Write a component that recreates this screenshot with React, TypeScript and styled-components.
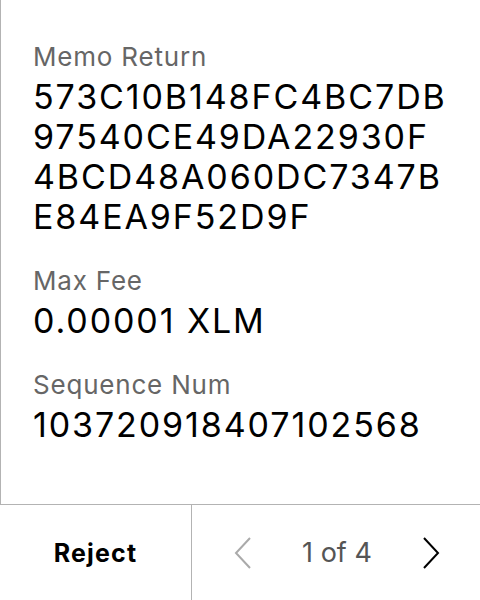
import React from "react";
import styled, { createGlobalStyle } from "styled-components";

const Global = createGlobalStyle`
  html, body { margin: 0; padding: 0; background: #fff; }
  body { font-family: Inter, "Noto Sans", sans-serif; }
`;

const Screen = styled.div`
  width: 480px;
  height: 600px;
  display: flex;
  flex-direction: column;
  background: #fff;
`;

const Body = styled.div`
  flex: 1;
  border-left: 1px solid #b3b3b3;
  padding: 41px 20px 0 32px;
  display: flex;
  flex-direction: column;
  gap: 28px;
`;

const Field = styled.div`
  display: flex;
  flex-direction: column;
  gap: 4px;
`;

const Label = styled.div`
  font-size: 26px;
  line-height: 32px;
  letter-spacing: 0.8px;
  color: #666;
  font-weight: 400;
`;

const Value = styled.div`
  font-size: 34px;
  line-height: 40px;
  letter-spacing: 1.9px;
  color: #000;
  white-space: nowrap;
`;

const ValueLine = styled.span`
  display: block;
`;

const Footer = styled.div`
  height: 95px;
  border-top: 1px solid #b3b3b3;
  display: flex;
`;

const RejectButton = styled.button`
  width: 192px;
  border: none;
  border-right: 1px solid #b3b3b3;
  background: none;
  font-family: inherit;
  font-size: 25px;
  letter-spacing: 1.2px;
  font-weight: 700;
  color: #000;
  padding: 0;
`;

const Pager = styled.div`
  flex: 1;
  display: flex;
  align-items: center;
  justify-content: space-between;
  padding: 0 40px 0 42px;
`;

const Arrow = styled.svg<{ $disabled?: boolean }>`
  width: 18px;
  height: 32px;
  stroke: ${(p) => (p.$disabled ? "#aaa" : "#000")};
  fill: none;
  stroke-width: 2;
`;

const Count = styled.span`
  font-size: 27px;
  color: #555;
`;

const memoLines = ["573C10B148FC4BC7DB", "97540CE49DA22930F", "4BCD48A060DC7347B", "E84EA9F52D9F"];

export default function App() {
  return (
    <Screen>
      <Global />
      <Body>
        <Field>
          <Label>Memo Return</Label>
          <Value>
            {memoLines.map((l) => (
              <ValueLine key={l}>{l}</ValueLine>
            ))}
          </Value>
        </Field>
        <Field>
          <Label>Max Fee</Label>
          <Value>0.00001 XLM</Value>
        </Field>
        <Field>
          <Label>Sequence Num</Label>
          <Value>103720918407102568</Value>
        </Field>
      </Body>
      <Footer>
        <RejectButton>Reject</RejectButton>
        <Pager>
          <Arrow $disabled viewBox="0 0 18 32">
            <polyline points="16,1 2,16 16,31" />
          </Arrow>
          <Count>1 of 4</Count>
          <Arrow viewBox="0 0 18 32">
            <polyline points="2,1 16,16 2,31" />
          </Arrow>
        </Pager>
      </Footer>
    </Screen>
  );
}
